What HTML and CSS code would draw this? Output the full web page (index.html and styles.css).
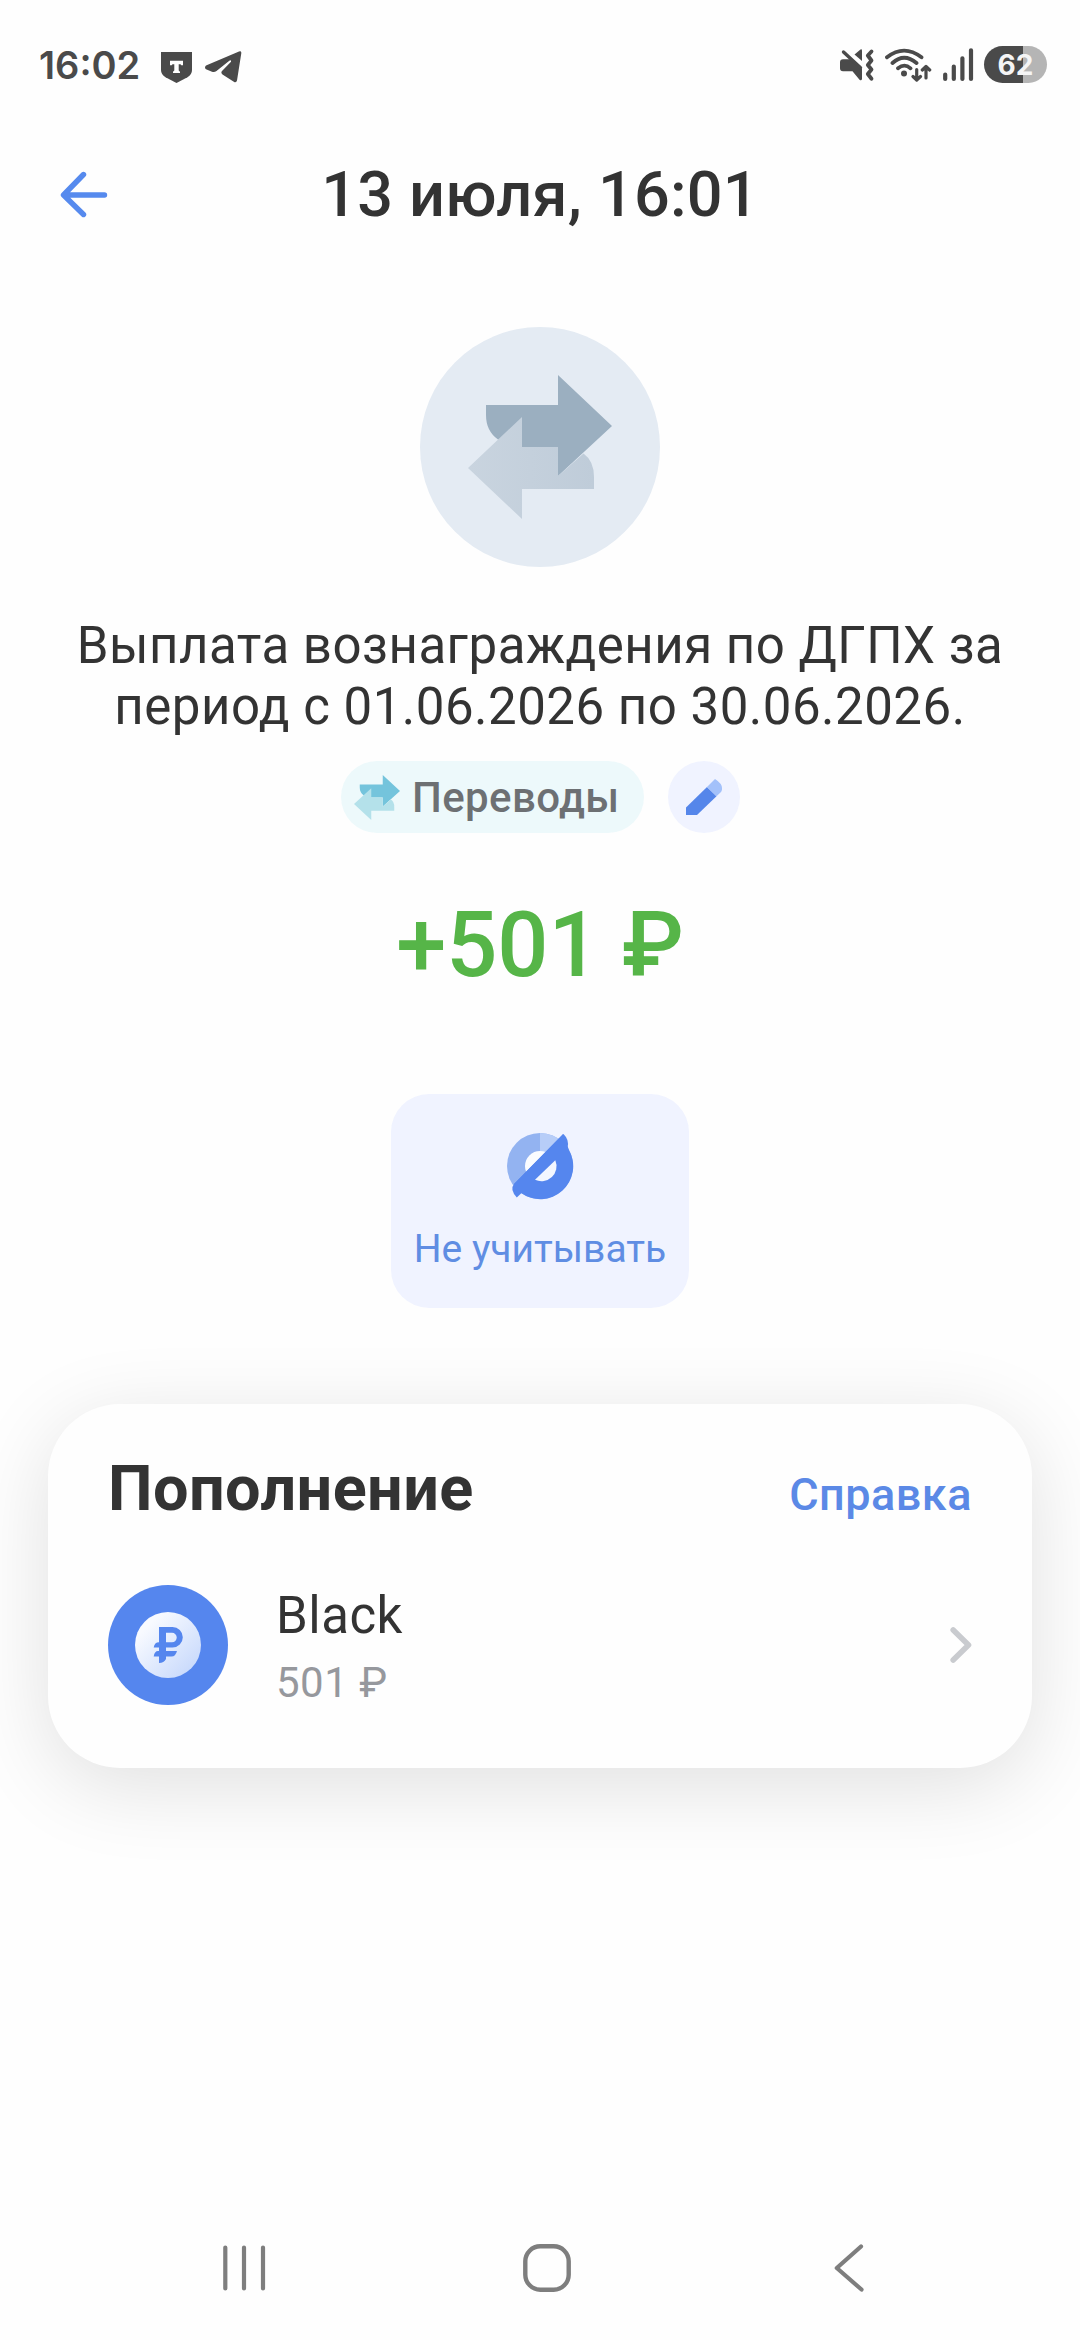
FILE: index.html
```html
<!DOCTYPE html>
<html lang="ru">
<head>
<meta charset="utf-8">
<title>13 июля, 16:01</title>
<link rel="stylesheet" href="styles.css">
</head>
<body>
<div class="screen">
  <div class="statusbar">
    <div class="status-left">
      <span class="clock">16:02</span>
      <svg class="ic-shield" width="31" height="31" viewBox="0 0 31 31"><path d="M0 0H31V18Q31 22.5 26.5 25.3L15.500 31L4.500 25.300Q0 22.500 0 18Z" fill="#4a4a4a"/><path d="M9 8.700H22V13.200H20.300L19.500 12.300H17.700V18.500L19 19.700V21H12V19.700L13.300 18.500V12.300H11.500L10.700 13.200H9Z" fill="#fff"/></svg>
      <svg class="ic-tg" width="37" height="32" viewBox="0 0 37 32"><path d="M1 14.500L34 .4Q36.600-.3 36.300 2.200L32 29.500Q31.300 32.300 28.800 30.800L17.500 23.500Q15.500 22 17 20L26 10.700Q26.300 8.700 24.300 9.700L11.500 20Q9.500 21.500 7 20.800L1 18.300Q-1 16.500 1 14.500Z" fill="#4a4a4a"/></svg>
    </div>
    <div class="status-right">
      <svg class="ic-mute" width="36" height="34" viewBox="0 0 36 34"><g fill="#4a4a4a"><path d="M4 11.300H12L23 21V31Q22.500 33 20.500 31.700L13.500 23.300H4Q1 23.300 1 20.300V14.300Q1 11.300 4 11.300Z"/><path d="M15.500 6.500L21.500 1.500Q23 .7 23 2.500V13Z"/></g><path d="M4.500 4L21.500 19.800" stroke="#4a4a4a" stroke-width="3.400" stroke-linecap="round"/><path d="M32.500 3.500L28.800 7.500L32.500 12.500L28.800 17L32.500 21.500L28.800 26L32.500 30.700" fill="none" stroke="#4a4a4a" stroke-width="3.800" stroke-linecap="round" stroke-linejoin="round"/></svg>
      <svg class="ic-wifi" width="48" height="34" viewBox="0 0 48 34"><g fill="none" stroke="#4a4a4a" stroke-width="3.800" stroke-linecap="round" stroke-linejoin="round"><path d="M2 9.300Q19-4 36.500 9.300M7.500 15Q19 4.500 31.500 15M13 20.300Q19.500 15 25.500 20.300"/><path stroke-width="3.200" d="M31.700 21.500V31.500M28 28.500L31.700 32L35.500 28.500M41 30V18.500M37.300 22L41 18.500L44.700 22"/></g><circle cx="19" cy="25.500" r="3" fill="#4a4a4a"/></svg>
      <svg class="ic-signal" width="31" height="34" viewBox="0 0 31 34"><path d="M2.200 26.500V31M10.800 18.500V31M19.400 10.300V31M28 2.300V31" stroke="#4a4a4a" stroke-width="4.200" stroke-linecap="round"/></svg>
      <div class="battery">62</div>
    </div>
  </div>

  <header class="header">
    <svg class="back" width="48" height="48" viewBox="0 0 48 48"><path d="M23.500 3.500L3.500 24L23.500 43.500M4 24H44.500" fill="none" stroke="#568aee" stroke-width="5.400" stroke-linecap="round" stroke-linejoin="round"/></svg>
    <h1 class="title">13 июля, 16:01</h1>
  </header>

  <main class="content">
    <svg class="hero" width="240" height="240" viewBox="0 0 240 240">
      <defs><linearGradient id="back-arrow" x1="0" x2="1"><stop offset="0" stop-color="#c9d4df"/><stop offset="1" stop-color="#bfccd9"/></linearGradient></defs>
      <circle cx="120" cy="120" r="120" fill="#e4ebf3"/>
      <path d="M66 78H138V48L192 99L138 149V120H102L78 112.500Q66 104 66 88Z" fill="#9bafc0"/>
      <path d="M48 141L102 90V120H138V149L163.500 126.500Q174 134 174 150V162H102V192Z" fill="url(#back-arrow)"/>
    </svg>
    <p class="desc">Выплата вознаграждения по ДГПХ за<br>период с 01.06.2026 по 30.06.2026.</p>
    <div class="tags">
      <div class="tag">
        <svg width="46" height="45" viewBox="48 48 144 144" preserveAspectRatio="none">
          <path d="M66 78H138V48L192 99L138 149V120H102L78 112.500Q66 104 66 88Z" fill="#74c4dc"/>
          <path d="M48 141L102 90V120H138V149L163.500 126.500Q174 134 174 150V162H102V192Z" fill="#b4e1ea"/>
        </svg>
        <span class="tag-text">Переводы</span>
      </div>
      <div class="edit">
        <svg width="36" height="36" viewBox="0 0 36 36"><path d="M0 28.500L21 8L30.500 17.300L11 36H0Z" fill="#5586ea"/><path d="M21 8L29 0Q36 4.500 36 9Q36.300 12 34.500 13.500L30.500 17.300Z" fill="#a3c1fa"/></svg>
      </div>
    </div>
    <div class="amount">+501 ₽</div>

    <div class="action">
      <svg width="78" height="76" viewBox="0 0 78 76">
        <circle cx="39" cy="38" r="33" fill="#93b3f1"/>
        <path d="M39 38V5A33 33 0 0 1 72 38Z" fill="#b7cdf8"/>
        <circle cx="39" cy="38" r="15" fill="#fafcff"/>
        <path d="M62 6L68 22A33 33 0 0 1 20 65L13 56Z" fill="#5586ee"/>
        <path d="M62.500 6Q68.500 12 66.500 19L20 65.500L15.800 69.500Q8.500 61.500 13 56Z" fill="#5586ee"/>
        <path d="M54.300 32.300A15 15 0 0 1 34 51.700Z" fill="#f3f7ff"/>
      </svg>
      <span class="action-text">Не учитывать</span>
    </div>

    <section class="card">
      <div class="card-head">
        <h2 class="card-title">Пополнение</h2>
        <span class="card-link">Справка</span>
      </div>
      <div class="account">
        <svg width="120" height="120" viewBox="0 0 120 120">
          <defs><linearGradient id="coin" x1="0" y1="0" x2="1" y2="1"><stop offset=".2" stop-color="#f8faff"/><stop offset="1" stop-color="#c0d4fb"/></linearGradient></defs>
          <circle cx="60" cy="60" r="60" fill="#5586ee"/>
          <circle cx="60" cy="60" r="33" fill="url(#coin)"/>
          <g fill="#5586ee"><path fill-rule="evenodd" d="M51 42H64.500A10.300 10.300 0 0 1 64.500 62.600H58V74Q56 78 51 78V62.600H45.700Q46.500 57.300 51 57.300ZM58 47.800V57.300H64A4.700 4.700 0 0 0 64 47.800Z"/><path d="M50 66H69Q67.500 71.500 63.500 71.500H45.700Q46.500 66 50 66Z"/></g>
        </svg>
        <div class="account-info">
          <span class="account-name">Black</span>
          <span class="account-sum">501 ₽</span>
        </div>
        <svg class="chevron" width="22" height="36" viewBox="0 0 22 36"><path d="M3.200 3L18.500 18L3.200 33" fill="none" stroke="#c9cbcf" stroke-width="5.600" stroke-linecap="round" stroke-linejoin="round"/></svg>
      </div>
    </section>
  </main>

  <nav class="navbar">
    <svg width="44" height="48" viewBox="0 0 44 48"><path d="M3.300 3.500V44.500M22 3.500V44.500M41 3.500V44.500" stroke="#7e7e7e" stroke-width="4.200" stroke-linecap="round"/></svg>
    <svg width="48" height="48" viewBox="0 0 48 48"><rect x="2.300" y="2.300" width="43.400" height="43.400" rx="15" fill="none" stroke="#7e7e7e" stroke-width="4.400"/></svg>
    <svg width="30" height="48" viewBox="0 0 30 48"><path d="M27 2.500L2.800 24L27.500 45.500" fill="none" stroke="#7e7e7e" stroke-width="4.200" stroke-linecap="round" stroke-linejoin="round"/></svg>
  </nav>
</div>
</body>
</html>
```
FILE: styles.css
```css
* { box-sizing: border-box; margin: 0; padding: 0; }
body { background: #fefefe; font-family: Roboto, "Liberation Sans", sans-serif; color: #333; }
svg { display: block; flex: none; }

.screen { display: flex; flex-direction: column; width: 1080px; height: 2340px; overflow: hidden; }

.statusbar { display: flex; justify-content: space-between; align-items: center; height: 130px; padding: 0 33px 0 39px; color: #4a4a4a; }
.status-left, .status-right { display: flex; align-items: center; }
.clock { font: 600 38px/54px Inter, "Open Sans", sans-serif; }
.ic-shield { margin: 5px 0 0 21px; }
.ic-tg { margin: 3px 0 0 13px; }
.ic-wifi { margin-left: 10px; }
.ic-signal { margin-left: 10px; }
.battery {
  width: 63px; height: 37px; margin: 0 0 1px 10px; border-radius: 19px;
  background: linear-gradient(90deg, #4a4a4a 0 39px, #b5b5b5 39px);
  color: #f5f5f5; font: 700 28px/38px Inter, Roboto, sans-serif; text-align: center;
}

.header { display: grid; grid-template-columns: 60px 1fr 60px; align-items: center; height: 130px; padding: 0 60px; }
.title { font-size: 63px; font-weight: 500; line-height: 74px; letter-spacing: .2px; text-align: center; white-space: nowrap; }

.content { display: flex; flex-direction: column; align-items: center; flex: 1; padding: 67px 48px 0; }
.desc { margin-top: 48px; font-size: 51px; line-height: 61px; letter-spacing: .5px; text-align: center; white-space: nowrap; }
.tags { display: flex; gap: 24px; margin-top: 24px; }
.tag { display: flex; align-items: center; justify-content: space-between; width: 303px; height: 72px; padding: 0 24px 0 13px; border-radius: 36px; background: #edf9fb; }
.tag-text { padding-top: 1px; font-size: 42px; font-weight: 500; line-height: 51px; letter-spacing: .4px; color: #6d7073; }
.edit { display: flex; align-items: center; justify-content: center; width: 72px; height: 72px; border-radius: 50%; background: #f0f3ff; }
.amount { margin-top: 60px; font-size: 90px; font-weight: 500; line-height: 106px; color: #56b548; white-space: nowrap; }

.action { display: flex; flex-direction: column; align-items: center; width: 298px; height: 214px; margin-top: 95px; padding-top: 34px; border-radius: 38px; background: #f0f3ff; }
.action-text { margin-top: 22px; font-size: 39px; line-height: 46px; color: #5f8de3; white-space: nowrap; }

.card { width: 984px; height: 364px; margin-top: 96px; padding: 48px 60px 0; border-radius: 72px; background: #fefefe; box-shadow: 0 18px 84px rgba(0, 0, 0, .12); }
.card-head { display: flex; justify-content: space-between; align-items: baseline; }
.card-title { font-size: 63px; font-weight: 700; line-height: 74px; letter-spacing: .4px; }
.card-link { font-size: 45px; font-weight: 500; line-height: 54px; letter-spacing: .5px; color: #5b89e6; }
.account { display: flex; align-items: center; height: 120px; margin-top: 59px; }
.account-info { display: flex; flex-direction: column; gap: 12px; flex: 1; margin-left: 48px; padding-top: 4px; letter-spacing: .5px; }
.account-name { font-size: 51px; line-height: 60px; }
.account-sum { font-size: 42px; line-height: 50px; color: #96989d; }

.navbar { display: grid; grid-template-columns: repeat(3, 302.5px); place-items: center; align-content: center; height: 144px; padding-left: 93px; }
```
